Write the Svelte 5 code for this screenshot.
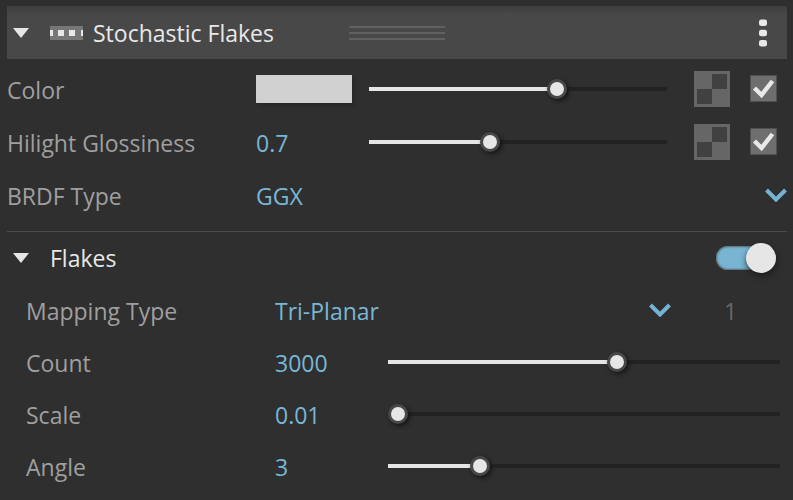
<script>
  let color = $state(64);
  let gloss = $state(40);
  let glossValue = $state('0.7');
  let brdf = $state('GGX');
  let mapping = $state('Tri-Planar');
  let flakesOn = $state(true);
  let colorMap = $state(true);
  let glossMap = $state(true);
  let params = $state([
    { id: 'count', label: 'Count', value: '3000', pos: 59 },
    { id: 'scale', label: 'Scale', value: '0.01', pos: 0 },
    { id: 'angle', label: 'Angle', value: '3', pos: 22 }
  ]);
</script>

{#snippet triangle()}
  <svg width="16" height="10" viewBox="0 0 16 10" aria-hidden="true"><path d="M0 0H16L8 10Z" fill="#e6e6e6" /></svg>
{/snippet}

{#snippet chevron()}
  <svg class="chevron" width="22" height="14" viewBox="0 0 22 14" aria-hidden="true">
    <path d="M1.500 2L11 11.500L20.500 2" fill="none" stroke="#74b3d2" stroke-width="4" />
  </svg>
{/snippet}

{#snippet checker()}
  <svg width="36" height="36" viewBox="0 0 36 36" aria-hidden="true">
    <path d="M0 0H36V36H0Z" fill="#666" />
    <path d="M18 3H33V18H18ZM3 18H18V33H3Z" fill="#414141" />
  </svg>
{/snippet}

{#snippet tick()}
  <svg width="27" height="27" viewBox="0 0 27 27" aria-hidden="true">
    <path d="M4.500 13L11.500 20L22.500 6" fill="none" stroke="#e8e8e8" stroke-width="4.400" />
  </svg>
{/snippet}

<main class="panel">
  <header class="header">
    <div class="heading">
      <button class="fold" aria-label="Collapse Stochastic Flakes">{@render triangle()}</button>
      <svg class="layer" width="33" height="14" viewBox="0 0 33 14" aria-hidden="true">
        <path d="M0 0H33V14H0Z" fill="#777" />
        <path d="M0 4H3V10H0ZM8 4H14V10H8ZM19 4H25V10H19ZM31 4H33V10H31Z" fill="#e8e8e8" />
      </svg>
      <h1>Stochastic Flakes</h1>
    </div>
    <svg width="96" height="14" viewBox="0 0 96 14" aria-hidden="true">
      <path d="M0 1H96M0 7H96M0 13H96" stroke="#606060" stroke-width="2" />
    </svg>
    <button class="menu" aria-label="Layer menu">
      <svg width="8" height="28" viewBox="0 0 8 28" aria-hidden="true">
        <g fill="#e8e8e8">
          <rect y="0.500" width="8" height="6.500" rx="2.200" />
          <rect y="10.700" width="8" height="6.500" rx="2.200" />
          <rect y="21" width="8" height="6.500" rx="2.200" />
        </g>
      </svg>
    </button>
  </header>

  <section class="group main">
    <div class="row">
      <label for="color">Color</label>
      <button class="swatch" aria-label="Pick color"></button>
      <input id="color" class="slider" type="range" bind:value={color} style="--fill: {color}%" />
      <button class="texture" aria-label="Color texture">{@render checker()}</button>
      <span class="check"><input type="checkbox" aria-label="Use color texture" bind:checked={colorMap} />{#if colorMap}{@render tick()}{/if}</span>
    </div>
    <div class="row">
      <label for="gloss">Hilight Glossiness</label>
      <input id="gloss" class="value" type="text" bind:value={glossValue} />
      <input class="slider" type="range" aria-label="Hilight Glossiness" bind:value={gloss} style="--fill: {gloss}%" />
      <button class="texture" aria-label="Glossiness texture">{@render checker()}</button>
      <span class="check"><input type="checkbox" aria-label="Use glossiness texture" bind:checked={glossMap} />{#if glossMap}{@render tick()}{/if}</span>
    </div>
    <div class="row">
      <label for="brdf">BRDF Type</label>
      <span class="choice">
        <select id="brdf" bind:value={brdf}><option>GGX</option></select>
        {@render chevron()}
      </span>
    </div>
  </section>

  <section class="flakes">
    <div class="subheader">
      <button class="fold" aria-label="Collapse Flakes">{@render triangle()}</button>
      <h2>Flakes</h2>
      <input class="toggle" type="checkbox" role="switch" aria-label="Flakes" bind:checked={flakesOn} />
    </div>
    <div class="group sub">
      <div class="row">
        <label for="mapping">Mapping Type</label>
        <span class="choice">
          <select id="mapping" bind:value={mapping}><option>Tri-Planar</option></select>
          {@render chevron()}
        </span>
        <span class="channel">1</span>
      </div>
      {#each params as p (p.id)}
        <div class="row">
          <label for={p.id}>{p.label}</label>
          <input id={p.id} class="value" type="text" bind:value={p.value} />
          <input class="slider" type="range" aria-label={p.label} bind:value={p.pos} style="--fill: {p.pos}%" />
        </div>
      {/each}
    </div>
  </section>
</main>

<style>
  :global(body) {
    background: #2f2f2f;
  }
  .panel {
    padding: 6px 6px 0 7px;
    font-family: "Open Sans", "Noto Sans", sans-serif;
    font-size: 23px;
    line-height: 32px;
    color: #9f9f9f;
  }
  .panel * {
    box-sizing: border-box;
  }
  svg {
    display: block;
    flex: none;
  }
  button {
    flex: none;
    padding: 0;
    border: 0;
    background: none;
  }
  input,
  select {
    margin: 0;
    padding: 0;
    border: 0;
    background: none;
    font: inherit;
    color: #78b7d6;
    appearance: none;
  }
  h1,
  h2 {
    margin: 0;
    font: inherit;
    color: #e8e8e8;
    white-space: nowrap;
  }
  .header {
    display: grid;
    grid-template-columns: 1fr auto 1fr;
    align-items: center;
    height: 53px;
    background: linear-gradient(#3d3d3d, #484848 8px);
  }
  .heading {
    display: flex;
    align-items: center;
    padding-left: 6px;
  }
  .fold {
    width: 16px;
  }
  .layer {
    margin: 0 10px 0 21px;
  }
  .menu {
    justify-self: end;
    margin-right: 20px;
  }
  .main {
    padding: 3px 0 10px;
  }
  .row {
    display: flex;
    align-items: center;
    height: 53px;
  }
  label {
    flex: none;
    width: 249px;
    padding-top: 2px;
    white-space: nowrap;
  }
  .value {
    flex: none;
    width: 96px;
    height: 34px;
    padding-top: 2px;
    margin-right: 17px;
  }
  .swatch {
    width: 96px;
    height: 28px;
    margin-right: 17px;
    background: #d1d1d1;
    box-shadow: 2px 2px 3px #272727;
  }
  .slider {
    flex: 1;
    min-width: 0;
    height: 20px;
    background: linear-gradient(to right, #e6e6e6 var(--fill), #222 0) center / 100% 4px no-repeat;
  }
  .slider::-webkit-slider-thumb {
    appearance: none;
    width: 20px;
    height: 20px;
    border: 3px solid #484848;
    border-radius: 50%;
    background: #e6e6e6;
    box-shadow: 2px 2px 4px #151515;
  }
  .texture {
    margin: 0 20px 0 27px;
  }
  .check {
    display: grid;
    margin-right: 10px;
  }
  .check > :global(*) {
    grid-area: 1 / 1;
    pointer-events: none;
  }
  .check input {
    width: 27px;
    height: 27px;
    border: 1px solid #505050;
    background: #6e6e6e;
    pointer-events: auto;
  }
  .choice {
    flex: 1;
    display: grid;
    align-items: center;
  }
  .choice > :global(*) {
    grid-area: 1 / 1;
  }
  select {
    width: 100%;
    height: 34px;
    padding-top: 2px;
  }
  .chevron {
    justify-self: end;
    pointer-events: none;
  }
  .flakes {
    border-top: 1px solid #4b4b4b;
  }
  .subheader {
    display: flex;
    align-items: center;
    height: 52px;
    padding: 0 11px 0 6px;
  }
  .subheader h2 {
    flex: 1;
    padding-left: 21px;
  }
  .toggle {
    display: flex;
    align-items: center;
    justify-content: flex-start;
    width: 60px;
    height: 24px;
    border: 0;
    border-radius: 12px;
    background: #444;
    box-shadow: inset 0 0 2px 1px #5a666c;
  }
  .toggle::before {
    content: "";
    flex: none;
    width: 30px;
    height: 30px;
    border-radius: 50%;
    background: #e6e6e6;
    box-shadow: 1px 3px 6px #1c1c1c;
  }
  .toggle:checked {
    justify-content: flex-end;
    background: #78b5d3;
  }
  .sub {
    padding: 0 0 0 19px;
  }
  .sub .row {
    height: 52px;
    padding-right: 7px;
  }
  .channel {
    width: 109px;
    padding: 2px 0 0 53px;
    color: #686868;
  }
</style>
